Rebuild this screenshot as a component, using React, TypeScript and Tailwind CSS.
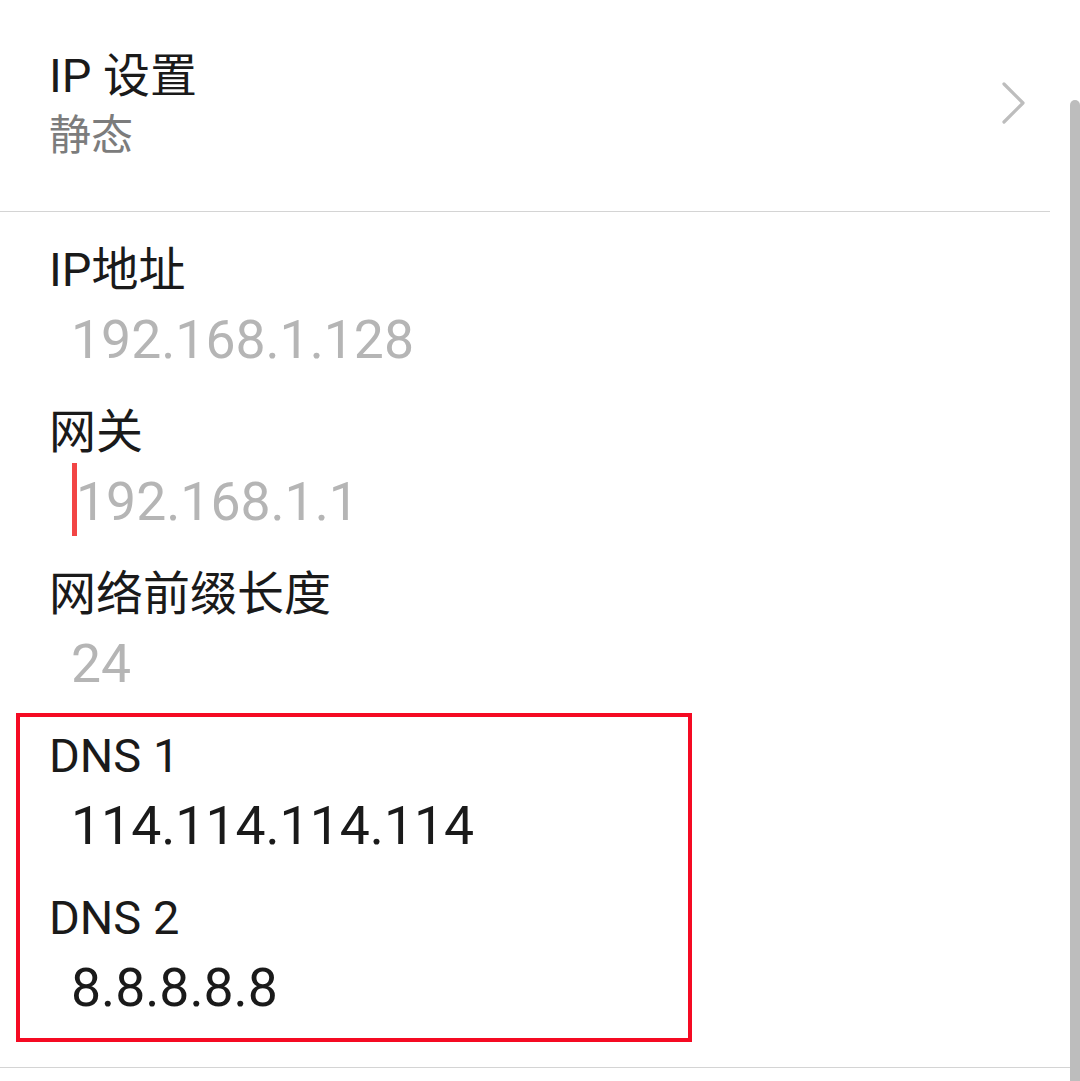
type FieldProps = {
  label: string
  value: string
  dark?: boolean
  caret?: boolean
  className?: string
}

const Field = ({ label, value, dark, caret, className }: FieldProps) => {
  return (
    <div className={className}>
      <div className="h-[47px] pt-[3px] text-[47px] leading-none text-[#1a1a1a]">{label}</div>
      <div
        className={`relative mt-[23px] h-[54px] text-[53.5px] leading-none ${dark ? 'text-[#1a1a1a]' : 'text-[#b5b5b5]'} ${caret ? 'pl-[27px]' : 'pl-[22px]'}`}
      >
        {caret && <span className="absolute left-[23px] top-[-12px] h-[73px] w-[5px] bg-[#f24545]" />}
        {value}
      </div>
    </div>
  )
}

export default function App() {
  return (
    <div className="relative h-[1081px] w-full overflow-hidden bg-white font-['Roboto','Noto_Sans_CJK_SC',sans-serif]">
      <div className="w-[1050px]">
        <div className="flex items-center justify-between pb-[58px] pl-[49px] pr-[22px] pt-[49px]">
          <div>
            <div className="h-[47px] pt-[3px] text-[47px] leading-none text-[#1a1a1a]">IP 设置</div>
            <div className="mt-[15px] h-[42px] pt-[4px] text-[42px] leading-none text-[#7c7c7c]">静态</div>
          </div>
          <svg width="28" height="44" viewBox="0 0 28 44" fill="none" className="mt-[4px]">
            <path
              d="M4 3 L23 22 L4 41"
              stroke="#bdbdbd"
              strokeWidth="3.2"
              strokeLinecap="round"
              strokeLinejoin="round"
            />
          </svg>
        </div>
        <div className="h-px bg-[#d4d4d4]" />
      </div>

      <div className="pl-[49px] pt-[31px]">
        <Field label="IP地址" value="192.168.1.128" />
        <Field label="网关" value="192.168.1.1" caret className="mt-[38px]" />
        <Field label="网络前缀长度" value="24" className="mt-[38px]" />
      </div>

      <div className="ml-[16px] mt-[22px] w-[676px] border-[4px] border-[#f50a23] pb-[23px] pl-[29px] pt-[12px]">
        <Field label="DNS 1" value="114.114.114.114" dark />
        <Field label="DNS 2" value="8.8.8.8.8" dark className="mt-[38px]" />
      </div>

      <div className="mt-[25px] h-px w-[1070px] bg-[#d4d4d4]" />

      <div className="absolute bottom-0 right-0 top-[100px] w-[10px] rounded-t-full bg-[#bdbdbd]" />
    </div>
  )
}
